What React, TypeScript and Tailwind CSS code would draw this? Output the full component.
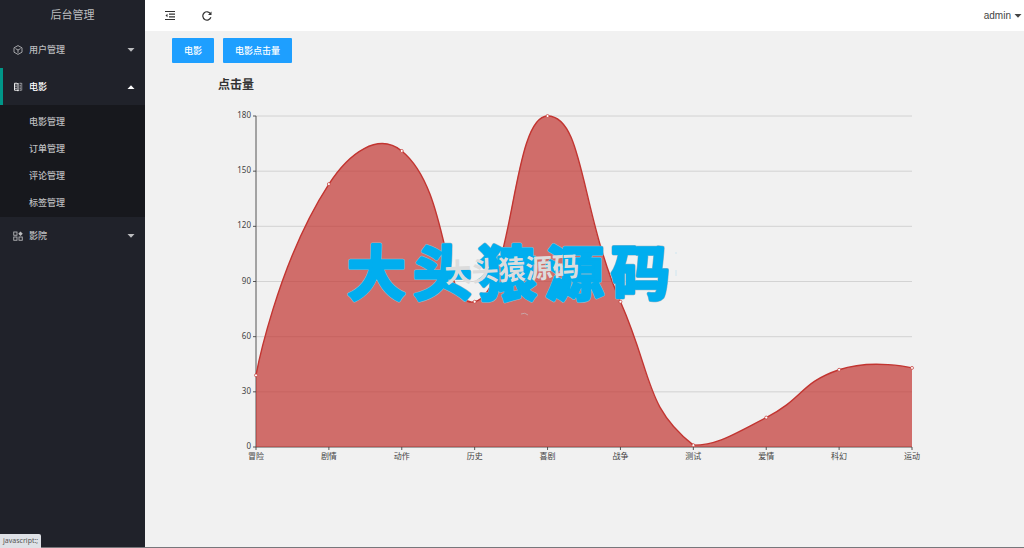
import type { ReactNode } from "react";

const data = [
  { name: "冒险", value: 39 },
  { name: "剧情", value: 143 },
  { name: "动作", value: 161 },
  { name: "历史", value: 79 },
  { name: "喜剧", value: 180 },
  { name: "战争", value: 79 },
  { name: "测试", value: 1 },
  { name: "爱情", value: 16 },
  { name: "科幻", value: 42 },
  { name: "运动", value: 43 },
];

const yTicks = [0, 30, 60, 90, 120, 150, 180];
const subMenu = ["电影管理", "订单管理", "评论管理", "标签管理"];

// Plot area inside the chart's viewBox
const LEFT = 111;
const RIGHT = 767;
const TOP = 18;
const BOTTOM = 349;
const SMOOTH = 0.5;

type Point = [number, number];

const toY = (value: number) => BOTTOM - (value / 180) * (BOTTOM - TOP);

const points: Point[] = data.map((d, i) => [
  LEFT + (i * (RIGHT - LEFT)) / (data.length - 1),
  toY(d.value),
]);

// Smooth curve whose control points stay inside the bounding box of the data
function smoothPath(pts: Point[]) {
  const xs = pts.map((p) => p[0]);
  const ys = pts.map((p) => p[1]);
  const clamp = ([x, y]: Point): Point => [
    Math.min(Math.max(x, Math.min(...xs)), Math.max(...xs)),
    Math.min(Math.max(y, Math.min(...ys)), Math.max(...ys)),
  ];
  const dist = (a: Point, b: Point) => Math.hypot(a[0] - b[0], a[1] - b[1]);

  let path = `M${pts[0].join(",")}`;
  let cp0 = pts[0];
  for (let i = 1; i < pts.length; i++) {
    const prev = pts[i - 1];
    const p = pts[i];
    const next = pts[i + 1];
    let cp1 = p;
    let nextCp0 = p;
    if (next) {
      const v = [next[0] - prev[0], next[1] - prev[1]];
      const ratio = dist(p, next) / (dist(p, next) + dist(p, prev));
      cp1 = [p[0] - v[0] * SMOOTH * (1 - ratio), p[1] - v[1] * SMOOTH * (1 - ratio)];
      nextCp0 = [p[0] + v[0] * SMOOTH * ratio, p[1] + v[1] * SMOOTH * ratio];
    }
    path += ` C${clamp(cp0).join(",")} ${clamp(cp1).join(",")} ${p.join(",")}`;
    cp0 = nextCp0;
  }
  return path;
}

const line = smoothPath(points);

function Caret({ up = false }: { up?: boolean }) {
  return (
    <svg viewBox="0 0 8 4" className="h-1 w-2 shrink-0" fill="currentColor" aria-hidden="true">
      <path d={up ? "M0.5 4 4 0.3 7.5 4Z" : "M0.5 0 4 3.7 7.5 0Z"} />
    </svg>
  );
}

function CubeIcon() {
  return (
    <svg viewBox="0 0 20 20" className="size-[10px]" fill="none" stroke="currentColor" strokeWidth="1.7" aria-hidden="true">
      <path d="M10 1.2 18 5.6v8.8l-8 4.4-8-4.4V5.6Z" />
      <path d="m5 7.2 5 2.8 5-2.8M10 10v5.5" />
    </svg>
  );
}

function BookIcon() {
  return (
    <svg viewBox="0 0 20 20" className="size-[10px]" fill="none" stroke="currentColor" aria-hidden="true">
      <path d="M3 2.5h5l2 1.5v14l-2-1.5H3Z" strokeWidth="1.8" />
      <path d="M4.5 6h3M4.5 9.5h3M4.5 13h3" strokeWidth="1.4" />
      <path d="M10 4l2-1.5h6M10 18l2-1.5h6M17.5 2.5v14" strokeWidth="1.2" strokeDasharray="3 1" />
      <path d="M13 6.5h3M13 10h3M13 13.5h3" strokeWidth="1.2" />
    </svg>
  );
}

function AppIcon() {
  return (
    <svg viewBox="0 0 20 20" className="size-[10px]" fill="none" stroke="currentColor" strokeWidth="1.7" aria-hidden="true">
      <rect x="1.5" y="2" width="6.5" height="6.5" />
      <rect x="1.5" y="12" width="6.5" height="6.5" />
      <rect x="12" y="12" width="6.5" height="6.5" />
      <path d="M15 0.8 19.5 5.3 15 9.8 10.5 5.3Z" fill="currentColor" stroke="none" />
    </svg>
  );
}

function MenuItem({ icon, label, open = false }: { icon: ReactNode; label: string; open?: boolean }) {
  return (
    <button
      type="button"
      aria-expanded={open}
      className={
        open
          ? "flex h-[37px] w-full items-center border-l-3 border-[#009688] pr-[10px] pl-[10px] text-white"
          : "flex h-[37px] w-full items-center pr-[10px] pl-[13px] text-[#bcbdbf]"
      }
    >
      {icon}
      <span className="ml-[6px] flex-1 text-left">{label}</span>
      <Caret up={open} />
    </button>
  );
}

function Sidebar() {
  return (
    <aside className="w-[145px] shrink-0 bg-[#20222a] text-[9px] font-medium">
      <div className="flex h-[31px] items-center justify-center text-[11px] font-normal text-[#bcbdbf]">后台管理</div>
      <nav>
        <MenuItem icon={<CubeIcon />} label="用户管理" />
        <MenuItem icon={<BookIcon />} label="电影" open />
        <ul className="bg-[#17181d] pt-[3px] pb-px">
          {subMenu.map((item) => (
            <li key={item}>
              <a href="#" className="flex h-[27px] items-center pl-[29px] text-[#bcbdbf]">
                {item}
              </a>
            </li>
          ))}
        </ul>
        <MenuItem icon={<AppIcon />} label="影院" />
      </nav>
    </aside>
  );
}

function Header() {
  return (
    <header className="flex h-[31px] items-center justify-between bg-white pr-[2px] pl-5 text-[#333]">
      <div className="flex items-center gap-[27px]">
        <button type="button" aria-label="收起菜单">
          <svg viewBox="0 0 20 18" className="h-[9px] w-[10px]" fill="none" stroke="currentColor" strokeWidth="2.2" aria-hidden="true">
            <path d="M0 1h20M8 6.3h12M8 11.7h12M0 17h20" />
            <path d="M5 5.5v7L1 9Z" fill="currentColor" stroke="none" />
          </svg>
        </button>
        <button type="button" aria-label="刷新">
          <svg viewBox="0 0 20 20" className="size-[10px]" fill="none" stroke="currentColor" strokeWidth="2.4" aria-hidden="true">
            <path d="M17.8 12.5A8.3 8.3 0 1 1 17 5.5" />
            <path d="M19 1v7h-7Z" fill="currentColor" stroke="none" />
          </svg>
        </button>
      </div>
      <button type="button" className="flex items-center gap-[3px] font-['Liberation_Sans',sans-serif] text-[10px] text-[#444]">
        admin
        <Caret />
      </button>
    </header>
  );
}

function ClickChart() {
  return (
    <svg viewBox="0 0 879 380" className="block w-full" role="img" aria-label="点击量">
      <g stroke="#ccc">
        {yTicks.slice(1).map((t) => (
          <line key={t} x1={LEFT} x2={RIGHT} y1={toY(t)} y2={toY(t)} strokeWidth="0.8" />
        ))}
      </g>
      <g stroke="#444" strokeWidth="0.9">
        <line x1={LEFT} x2={LEFT} y1={TOP} y2={BOTTOM} />
        <line x1={LEFT} x2={RIGHT} y1={BOTTOM} y2={BOTTOM} />
        {yTicks.map((t) => (
          <line key={t} x1={LEFT - 3} x2={LEFT} y1={toY(t)} y2={toY(t)} />
        ))}
        {points.map(([x]) => (
          <line key={x} x1={x} x2={x} y1={BOTTOM} y2={BOTTOM + 3} />
        ))}
      </g>
      <g className="text-[8px]" fill="#444">
        {yTicks.map((t) => (
          <text key={t} x={LEFT - 5} y={toY(t) + 2} textAnchor="end">
            {t}
          </text>
        ))}
        {data.map((d, i) => (
          <text key={d.name} x={points[i][0]} y={BOTTOM + 12} textAnchor="middle">
            {d.name}
          </text>
        ))}
      </g>

      <path d={`${line} L${RIGHT},${BOTTOM} L${LEFT},${BOTTOM} Z`} fill="#c23531" fillOpacity="0.7" />
      <path d={line} fill="none" stroke="#c23531" strokeWidth="1.4" />
      {points.map(([x, y]) => (
        <circle key={x} cx={x} cy={y} r="1.5" fill="#fff" stroke="#c23531" strokeWidth="0.7" />
      ))}

      {/* Watermark */}
      <g strokeLinejoin="round">
        <text x="202 268 333 400 466" y="197" className="text-[59px] font-bold" fill="#9fb9c9" stroke="#9fb9c9" strokeWidth="4">
          大头猿源码
        </text>
        <text x="202 268 333 400 466" y="197" className="text-[59px] font-bold" fill="#00aeef" stroke="#00aeef" strokeWidth="3">
          大头猿源码
        </text>
        <text x="300" y="185" className="text-[27px] font-bold" fill="#dcdcdc" transform="rotate(-3 300 185)">
          大头猿源码
        </text>
        <path d="M376 216q4-2 7 1" fill="none" stroke="#c9a5a5" strokeWidth="1" />
        <path d="M531 154v2M531 172v6" stroke="#cfe6f0" strokeWidth="1" />
      </g>
    </svg>
  );
}

export default function App() {
  return (
    <div className="flex min-h-screen border-b border-[#77777b] bg-[#f1f1f1] font-['Noto_Sans','Noto_Sans_CJK_SC',sans-serif]">
      <Sidebar />
      <div className="min-w-0 flex-1">
        <Header />
        <main>
          <div className="flex gap-[9px] px-[27px] pt-[7px]">
            <button type="button" className="h-[25px] rounded-[1px] bg-[#1e9fff] px-3 text-[9px] font-medium text-white">
              电影
            </button>
            <button type="button" className="h-[25px] rounded-[1px] bg-[#1e9fff] px-3 text-[9px] font-medium text-white">
              电影点击量
            </button>
          </div>
          <h2 className="mt-[13px] pl-[73px] text-[12px] leading-[18px] font-bold text-[#333]">点击量</h2>
          <div className="pt-1">
            <ClickChart />
          </div>
        </main>
      </div>
      {/* Browser status bubble */}
      <div className="fixed bottom-0 left-0 h-[14px] rounded-tr-xs bg-[#dee1e6] px-[3px] text-[7px] leading-[14px] text-[#555]">
        javascript:;
      </div>
    </div>
  );
}
